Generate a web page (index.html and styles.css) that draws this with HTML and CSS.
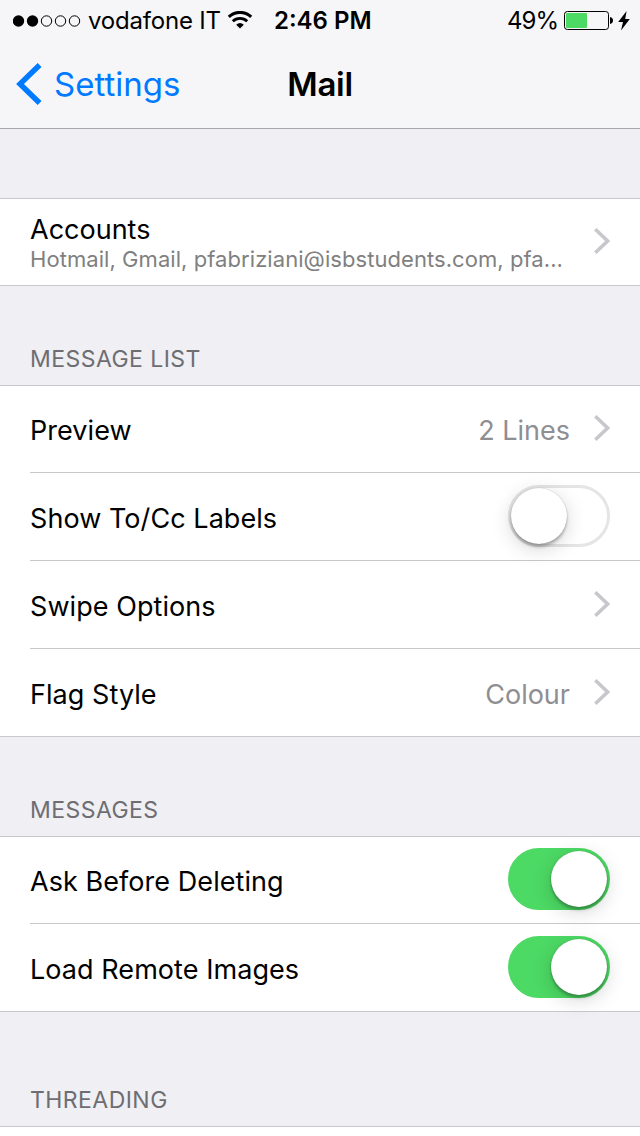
FILE: index.html
```html
<!DOCTYPE html>
<html lang="en">
<head>
  <meta charset="UTF-8">
  <meta name="viewport" content="width=device-width, initial-scale=1.0">
  <link rel="stylesheet" href="styles.css">
  <title>Mail</title>
</head>
<body>
<!-- Shared shapes -->
<svg class="defs" width="0" height="0">
  <symbol id="chevron" viewBox="0 0 16 26">
    <path d="M1.3 1.3L13.6 13L1.3 24.7" fill="none" stroke="#c7c7cc" stroke-width="3.6"/>
  </symbol>
</svg>

<header class="header">
  <div class="status-bar">
    <div class="status-left">
      <svg class="signal" width="68" height="12" viewBox="0 0 68 12">
        <circle cx="5.5" cy="6" r="5.7"/>
        <circle cx="19.5" cy="6" r="5.7"/>
        <circle class="empty" cx="33.5" cy="6" r="5.2"/>
        <circle class="empty" cx="47.5" cy="6" r="5.2"/>
        <circle class="empty" cx="61.5" cy="6" r="5.2"/>
      </svg>
      <span class="carrier">vodafone IT</span>
      <svg class="wifi" width="26" height="18" viewBox="0 0 26 18">
        <path d="M1.8 5.8A16.4 16.4 0 0 1 24.2 5.8" fill="none" stroke="#000" stroke-width="3"/>
        <path d="M5.8 10.2A10.4 10.4 0 0 1 20.2 10.2" fill="none" stroke="#000" stroke-width="2.8"/>
        <path d="M9.2 13.7A5.8 5.8 0 0 1 16.8 13.7L13 17.6Z"/>
      </svg>
    </div>
    <div class="time">2:46 PM</div>
    <div class="status-right">
      <span class="percent">49%</span>
      <svg class="battery" width="50" height="20" viewBox="0 0 50 20">
        <rect x="0.5" y="0.5" width="44" height="18" rx="2.8" fill="none" stroke="#000"/>
        <rect x="2" y="2" width="21" height="15" rx="1" fill="#4cd964"/>
        <path d="M46 6C48 6.4 49 7.6 49 9.5S48 12.6 46 13Z"/>
      </svg>
      <svg class="bolt" width="12" height="20" viewBox="0 0 12 20">
        <path d="M8.6 0L0.2 11H5L3 19.6L11.8 8H7.2Z"/>
      </svg>
    </div>
  </div>
  <nav class="nav-bar">
    <a class="back">
      <svg width="26" height="42" viewBox="0 0 26 42">
        <path d="M23.6 2L4 21L23.6 40" fill="none" stroke="#007aff" stroke-width="5.4"/>
      </svg>
      <span>Settings</span>
    </a>
    <h1 class="title">Mail</h1>
  </nav>
</header>

<main>
  <section class="group accounts">
    <div class="row">
      <div class="stack">
        <div class="name">Accounts</div>
        <div class="detail">Hotmail, Gmail, pfabriziani@isbstudents.com, pfa...</div>
      </div>
      <svg class="chevron"><use href="#chevron"/></svg>
    </div>
  </section>

  <h2 class="group-title">MESSAGE LIST</h2>
  <section class="group">
    <div class="row">
      <span class="label">Preview</span>
      <span class="value">2 Lines</span>
      <svg class="chevron"><use href="#chevron"/></svg>
    </div>
    <div class="row">
      <span class="label">Show To/Cc Labels</span>
      <span class="toggle"><span class="knob"></span></span>
    </div>
    <div class="row">
      <span class="label">Swipe Options</span>
      <svg class="chevron"><use href="#chevron"/></svg>
    </div>
    <div class="row">
      <span class="label">Flag Style</span>
      <span class="value">Colour</span>
      <svg class="chevron"><use href="#chevron"/></svg>
    </div>
  </section>

  <h2 class="group-title">MESSAGES</h2>
  <section class="group">
    <div class="row">
      <span class="label">Ask Before Deleting</span>
      <span class="toggle on"><span class="knob"></span></span>
    </div>
    <div class="row">
      <span class="label">Load Remote Images</span>
      <span class="toggle on"><span class="knob"></span></span>
    </div>
  </section>

  <h2 class="group-title last">THREADING</h2>
  <section class="group threading"></section>
</main>
</body>
</html>
```
FILE: styles.css
```css
* {
  box-sizing: border-box;
}

body {
  display: flex;
  flex-direction: column;
  margin: 0;
  width: 640px;
  height: 1136px;
  overflow: hidden;
  background-color: #efeff4;
  font-family: Inter, "Liberation Sans", sans-serif;
  font-size: 27px;
  color: #000;
  white-space: nowrap;
}

main {
  display: flex;
  flex: 1;
  flex-direction: column;
}

.defs,
svg {
  display: block;
  flex: none;
}

/* Header */
.header {
  height: 129px;
  background-color: #f6f6f8;
  border-bottom: 1px solid #a7a7aa;
}

.status-bar {
  display: grid;
  grid-template-columns: 261px 98px 1fr;
  height: 40px;
  padding: 1px 10px 0 13px;
  font-size: 24px;
  line-height: 40px;
}

.status-left,
.status-right {
  display: flex;
  align-items: center;
}

.status-right {
  justify-content: flex-end;
}

.signal .empty {
  fill: none;
  stroke: #000;
  stroke-width: 1;
}

.carrier {
  width: 132px;
  margin: 0 7px 0 7px;
  letter-spacing: -0.2px;
}

.wifi {
  margin-bottom: 2px;
}

.time {
  font-weight: 600;
}

.percent {
  margin-right: 6px;
  letter-spacing: -1px;
}

.bolt {
  margin-left: 4px;
}

.nav-bar {
  display: grid;
  grid-template-columns: 1fr auto 1fr;
  align-items: center;
  height: 88px;
  padding: 0 16px;
}

.back {
  display: flex;
  align-items: center;
  gap: 12px;
  color: #007aff;
  font-size: 33px;
}

.title {
  margin: 0;
  font-size: 33px;
  font-weight: 600;
  letter-spacing: -0.3px;
}

/* Groups of rows */
.group {
  background-color: #fff;
  border-top: 1px solid #c8c7cc;
  border-bottom: 1px solid #c8c7cc;
}

.accounts {
  margin-top: 69px;
}

/* Cut off by the bottom of the screen */
.threading {
  flex: 1;
  border-bottom: none;
}

.group-title {
  height: 99px;
  margin: 0;
  padding: 58px 0 0 30px;
  color: #6d6d72;
  font-size: 23px;
  font-weight: 400;
  line-height: 30px;
  letter-spacing: 0.45px;
}

.group-title.last {
  height: 114px;
  padding-top: 73px;
}

.row {
  display: flex;
  align-items: center;
  height: 88px;
  margin-left: 30px;
  padding: 1px 30px 2px 0;
  border-bottom: 1px solid #c8c7cc;
}

.row:first-child {
  height: 87px;
  padding-top: 0;
}

.row:last-child {
  height: 87px;
  border-bottom: none;
}

.row:first-child:last-child {
  height: 86px;
}

.label {
  flex: 1;
  padding-top: 4px;
  letter-spacing: 0.06px;
}

.value {
  padding-top: 4px;
  color: #8e8e93;
}

.chevron {
  width: 16px;
  height: 26px;
  margin-left: 24px;
}

.stack {
  flex: 1;
}

.name {
  padding-top: 5px;
  line-height: 32px;
}

.detail {
  color: #808080;
  font-size: 22px;
  line-height: 27px;
  letter-spacing: 0.06px;
}

/* Switches */
.toggle {
  display: flex;
  width: 102px;
  height: 62px;
  border: 3px solid #e5e5e5;
  border-radius: 31px;
}

.knob {
  width: 56px;
  height: 56px;
  border-radius: 50%;
  background-color: #fff;
  box-shadow: 0 3px 3px rgba(0, 0, 0, 0.25), 0 5px 20px rgba(0, 0, 0, 0.17), 0 0 1px rgba(0, 0, 0, 0.3);
}

.toggle.on {
  justify-content: flex-end;
  background-color: #4cd964;
  border-color: #4cd964;
}
```
